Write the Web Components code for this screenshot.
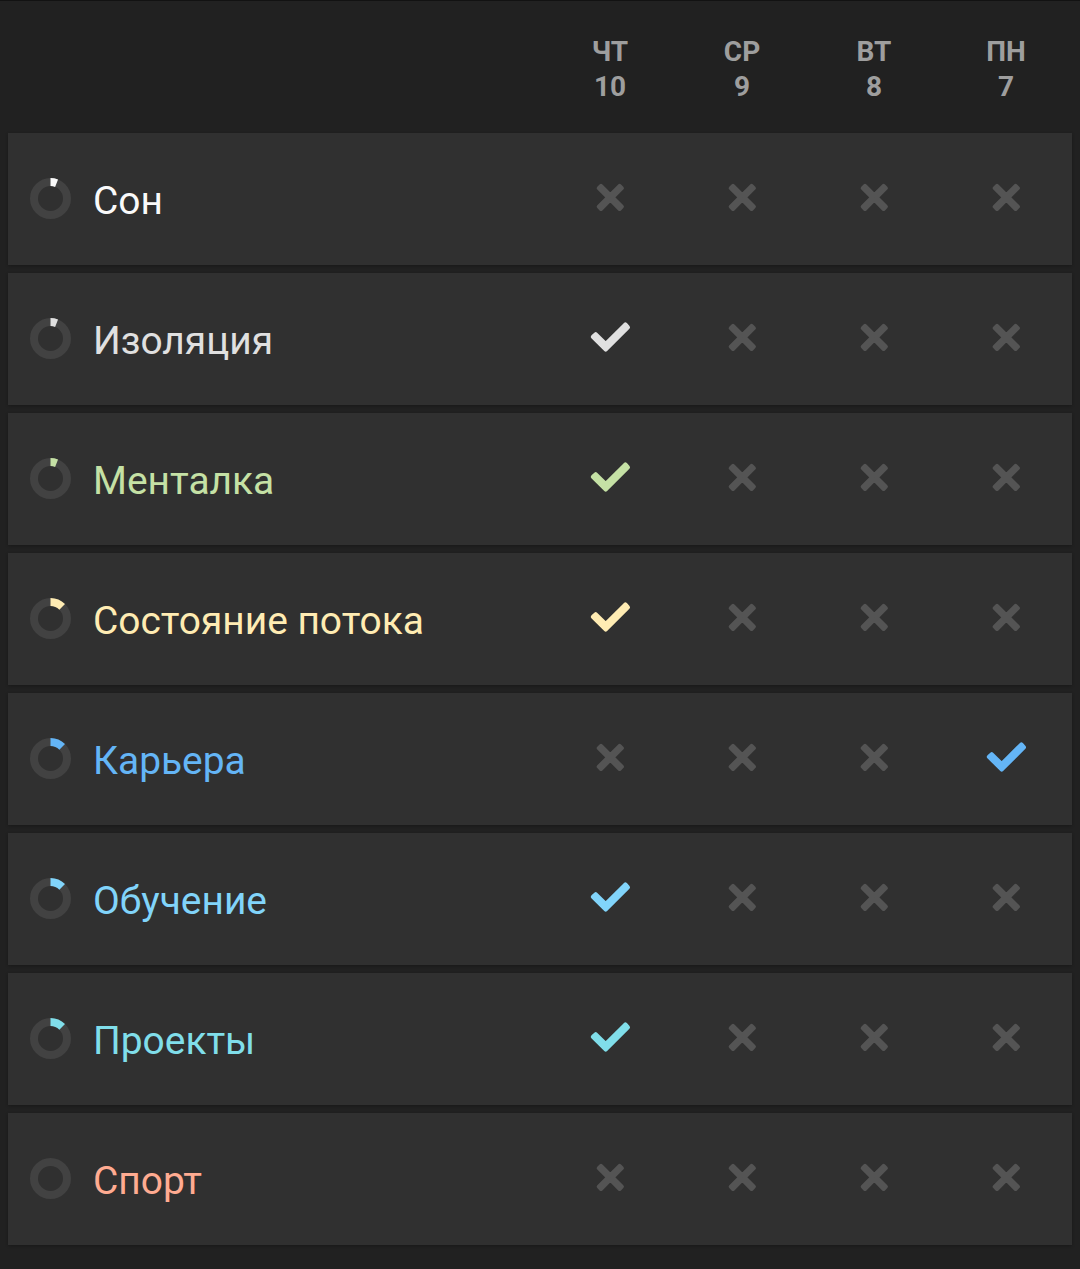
<!DOCTYPE html>
<html lang="ru">
<head>
<meta charset="utf-8">
<title>Привычки</title>
<style>
  body {
    margin: 0;
    background-color: #212121;
    font-family: Roboto, sans-serif;
  }
</style>
</head>
<body>
<habit-board>
  <day-label slot="days" day="ЧТ" date="10"></day-label>
  <day-label slot="days" day="СР" date="9"></day-label>
  <day-label slot="days" day="ВТ" date="8"></day-label>
  <day-label slot="days" day="ПН" date="7"></day-label>

  <habit-row color="#fafafa" progress="0.06" marks="0000">Сон</habit-row>
  <habit-row color="#e0e0e0" progress="0.06" marks="1000">Изоляция</habit-row>
  <habit-row color="#c5e1a5" progress="0.06" marks="1000">Менталка</habit-row>
  <habit-row color="#ffecb3" progress="0.125" marks="1000">Состояние потока</habit-row>
  <habit-row color="#64b5f6" progress="0.125" marks="0001">Карьера</habit-row>
  <habit-row color="#81d4fa" progress="0.125" marks="1000">Обучение</habit-row>
  <habit-row color="#80deea" progress="0.125" marks="1000">Проекты</habit-row>
  <habit-row color="#ffab91" progress="0" marks="0000">Спорт</habit-row>
</habit-board>

<script>
const makeTemplate = (html) => {
  const template = document.createElement("template");
  template.innerHTML = html;
  return template;
};

const boardTemplate = makeTemplate(`
  <style>
    :host {
      display: block;
      box-sizing: border-box;
      width: 1080px;
      height: 1269px;
      border-top: 1px solid #121212;
      overflow: hidden;
    }

    header {
      display: flex;
      justify-content: flex-end;
      box-sizing: border-box;
      height: 132px;
      padding: 33px 8px 0;
    }

    main {
      display: flex;
      flex-direction: column;
      gap: 8px;
      padding: 0 8px;
    }
  </style>
  <header><slot name="days"></slot></header>
  <main><slot></slot></main>
`);

class HabitBoard extends HTMLElement {
  constructor() {
    super();
    this.attachShadow({ mode: "open" });
    this.shadowRoot.appendChild(boardTemplate.content.cloneNode(true));
  }
}

const dayTemplate = makeTemplate(`
  <style>
    :host {
      display: flex;
      flex-direction: column;
      width: 132px;
      color: #9e9e9e;
      font-size: 28px;
      font-weight: 700;
      line-height: 35px;
      text-align: center;
    }
  </style>
  <span class="day"></span>
  <span class="date"></span>
`);

class DayLabel extends HTMLElement {
  constructor() {
    super();
    this.attachShadow({ mode: "open" });
    this.shadowRoot.appendChild(dayTemplate.content.cloneNode(true));
  }

  connectedCallback() {
    this.shadowRoot.querySelector(".day").textContent = this.getAttribute("day");
    this.shadowRoot.querySelector(".date").textContent = this.getAttribute("date");
  }
}

const ringTemplate = makeTemplate(`
  <style>
    :host {
      display: block;
      width: 41px;
      height: 41px;
    }

    svg {
      display: block;
    }

    circle {
      fill: none;
      stroke: #424242;
      stroke-width: 8;
    }

    .value {
      stroke: currentColor;
    }
  </style>
  <svg width="41" height="41" viewBox="0 0 41 41">
    <circle cx="20.5" cy="20.5" r="16.5"/>
    <circle class="value" cx="20.5" cy="20.5" r="16.5" pathLength="100" transform="rotate(-90 20.5 20.5)"/>
  </svg>
`);

class ProgressRing extends HTMLElement {
  constructor() {
    super();
    this.attachShadow({ mode: "open" });
    this.shadowRoot.appendChild(ringTemplate.content.cloneNode(true));
  }

  connectedCallback() {
    const value = Number(this.getAttribute("value"));
    const arc = this.shadowRoot.querySelector(".value");
    if (value > 0) {
      arc.setAttribute("stroke-dasharray", `${value * 100} 100`);
    } else {
      arc.remove();
    }
  }
}

const markTemplate = makeTemplate(`
  <style>
    :host {
      display: flex;
      align-items: center;
      justify-content: center;
      width: 132px;
      height: 132px;
    }

    svg {
      fill: currentColor;
      stroke: currentColor;
      stroke-width: 4;
      stroke-linejoin: round;
    }

    .cross {
      color: #545454;
    }

    :host([checked]) .cross,
    :host(:not([checked])) .check {
      display: none;
    }
  </style>
  <svg class="check" width="44" height="44" viewBox="0 0 44 44">
    <path d="M4.8 19.8L7.7 17.1L17.7 27L37.4 7.3L40 10.3L17.7 32.7Z"/>
  </svg>
  <svg class="cross" width="44" height="44" viewBox="0 0 44 44">
    <path d="M13 8.8L22.3 18.1L31.6 8.8L33.9 11.1L24.6 20.4L33.9 29.7L31.6 32L22.3 22.7L13 32L10.7 29.7L20 20.4L10.7 11.1Z"/>
  </svg>
`);

class HabitMark extends HTMLElement {
  constructor() {
    super();
    this.attachShadow({ mode: "open" });
    this.shadowRoot.appendChild(markTemplate.content.cloneNode(true));
  }
}

const rowTemplate = makeTemplate(`
  <style>
    :host {
      display: flex;
      align-items: center;
      height: 132px;
      background-color: #303030;
      box-shadow: 0 1px 3px rgba(0, 0, 0, .25);
    }

    progress-ring {
      margin: 0 22px 1px;
    }

    .name {
      flex: 1;
      padding-top: 4px;
      font-size: 38.9px;
      line-height: 46px;
      white-space: nowrap;
    }

    .marks {
      display: flex;
    }
  </style>
  <span class="name"><slot></slot></span>
  <div class="marks"></div>
`);

class HabitRow extends HTMLElement {
  constructor() {
    super();
    this.attachShadow({ mode: "open" });
    this.shadowRoot.appendChild(rowTemplate.content.cloneNode(true));
  }

  connectedCallback() {
    this.style.color = this.getAttribute("color");

    const ring = document.createElement("progress-ring");
    ring.setAttribute("value", this.getAttribute("progress"));
    this.shadowRoot.querySelector(".name").before(ring);

    const marks = this.shadowRoot.querySelector(".marks");
    for (const done of this.getAttribute("marks")) {
      const mark = document.createElement("habit-mark");
      mark.toggleAttribute("checked", done === "1");
      marks.appendChild(mark);
    }
  }
}

window.customElements.define("habit-board", HabitBoard);
window.customElements.define("day-label", DayLabel);
window.customElements.define("progress-ring", ProgressRing);
window.customElements.define("habit-mark", HabitMark);
window.customElements.define("habit-row", HabitRow);
</script>
</body>
</html>
